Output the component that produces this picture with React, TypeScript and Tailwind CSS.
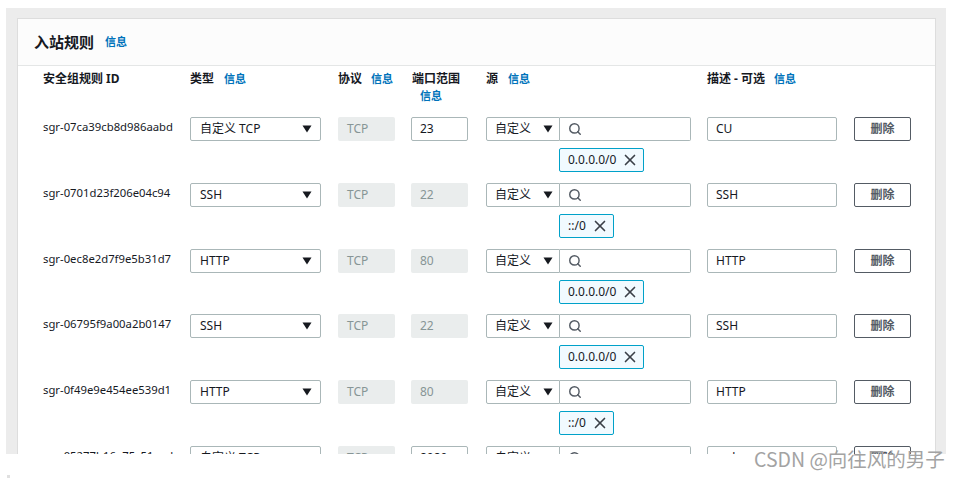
import { Search, X } from "lucide-react";

type Rule = {
  id: string;
  type: string;
  port: string;
  custom: boolean;
  cidr: string;
  desc: string;
};

const rules: Rule[] = [
  { id: "sgr-07ca39cb8d986aabd", type: "自定义 TCP", port: "23", custom: true, cidr: "0.0.0.0/0", desc: "CU" },
  { id: "sgr-0701d23f206e04c94", type: "SSH", port: "22", custom: false, cidr: "::/0", desc: "SSH" },
  { id: "sgr-0ec8e2d7f9e5b31d7", type: "HTTP", port: "80", custom: false, cidr: "0.0.0.0/0", desc: "HTTP" },
  { id: "sgr-06795f9a00a2b0147", type: "SSH", port: "22", custom: false, cidr: "0.0.0.0/0", desc: "SSH" },
  { id: "sgr-0f49e9e454ee539d1", type: "HTTP", port: "80", custom: false, cidr: "::/0", desc: "HTTP" },
  { id: "sgr-05277b16e75c51eed", type: "自定义 TCP", port: "8080", custom: true, cidr: "0.0.0.0/0", desc: "web" },
];

const cols = "grid grid-cols-[147px_148px_73px_75px_221px_147px_57px]";

function Info({ className = "" }: { className?: string }) {
  return <span className={`text-[11px] font-bold text-[#0073bb] ${className}`}>信息</span>;
}

function Caret() {
  return (
    <svg width="10" height="8" viewBox="0 0 10 8" className="shrink-0">
      <path d="M0.5 0.5h9L5 7.5z" fill="#16191f" />
    </svg>
  );
}

function RuleRow({ r }: { r: Rule }) {
  return (
    <div className={`${cols} h-[65.75px] items-start`}>
      <div className="text-[11.3px] leading-[17px] pt-[1px]">{r.id}</div>
      <div className="w-[131px] h-[24px] border border-[#aab7b8] rounded-[2px] pl-[9px] pr-[8px] flex items-center justify-between">
        <span>{r.type}</span>
        <Caret />
      </div>
      <div className="w-[57px] h-[24px] bg-[#eaeded] rounded-[2px] pl-[9px] flex items-center text-[#879596]">TCP</div>
      {r.custom ? (
        <div className="w-[57px] h-[24px] border border-[#aab7b8] rounded-[2px] pl-[8px] flex items-center">{r.port}</div>
      ) : (
        <div className="w-[57px] h-[24px] bg-[#eaeded] rounded-[2px] pl-[9px] flex items-center text-[#879596]">{r.port}</div>
      )}
      <div className="flex flex-col gap-[7px]">
        <div className="flex h-[24px]">
          <div className="w-[74px] border border-[#aab7b8] rounded-l-[2px] pl-[8px] pr-[6px] flex items-center justify-between">
            <span>自定义</span>
            <Caret />
          </div>
          <div className="w-[131px] border border-l-0 border-[#aab7b8] rounded-r-[2px] pl-[8px] flex items-center">
            <Search size={14} strokeWidth={2.5} color="#545b64" />
          </div>
        </div>
        <div className="ml-[73px] self-start h-[24px] border border-[#00a1c9] bg-[#f1faff] rounded-[2px] pl-[8px] pr-[4px] flex items-center gap-[5px]">
          <span>{r.cidr}</span>
          <X size={18} strokeWidth={2.2} color="#3a4048" />
        </div>
      </div>
      <div className="w-[130px] h-[24px] border border-[#aab7b8] rounded-[2px] pl-[8px] flex items-center">{r.desc}</div>
      <button
        type="button"
        className="w-[57px] h-[24px] border border-[#545b64] rounded-[2px] flex items-center justify-center font-bold text-[#545b64]"
      >
        删除
      </button>
    </div>
  );
}

export default function App() {
  return (
    <div
      className="relative w-[959px] h-[481px] bg-white overflow-hidden text-[12px] text-[#16191f]"
      style={{ fontFamily: '"Noto Sans", "Noto Sans CJK SC", sans-serif' }}
    >
      <div className="ml-[6px] mt-[8px] w-[940px] h-[446px] bg-[#ececec] pt-[10px] pl-[11px] overflow-hidden">
        <div className="w-[919px] bg-white border border-[#dddddd]">
          <div className="h-[47px] px-[16px] flex items-center gap-[11px] border-b border-[#e4e6e6] bg-[#fcfcfc]">
            <h2 className="text-[15px] font-bold">入站规则</h2>
            <Info />
          </div>
          <div className="pl-[25px]">
            <div className={`${cols} h-[51px] pt-[4px] leading-[17px] font-bold`}>
              <div>安全组规则 ID</div>
              <div className="flex gap-[10px]">
                <span>类型</span>
                <Info />
              </div>
              <div className="flex gap-[9px]">
                <span>协议</span>
                <Info />
              </div>
              <div className="flex flex-col">
                <span className="pl-[1px]">端口范围</span>
                <Info className="pl-[9px]" />
              </div>
              <div className="flex gap-[10px]">
                <span>源</span>
                <Info />
              </div>
              <div className="flex gap-[9px]">
                <span>描述 - 可选</span>
                <Info />
              </div>
              <div />
            </div>
            {rules.map((r) => (
              <RuleRow key={r.id} r={r} />
            ))}
          </div>
        </div>
      </div>
      <div className="absolute left-[7px] top-[475px] w-[3px] h-[3px] bg-[#e0e0e0]" />
      <div
        className="absolute left-[754px] top-[446px] text-[19.5px] leading-[26px] text-[#a3a3a3]"
        style={{ fontFamily: '"Noto Sans CJK SC", sans-serif' }}
      >
        CSDN @向往风的男子
      </div>
    </div>
  );
}
